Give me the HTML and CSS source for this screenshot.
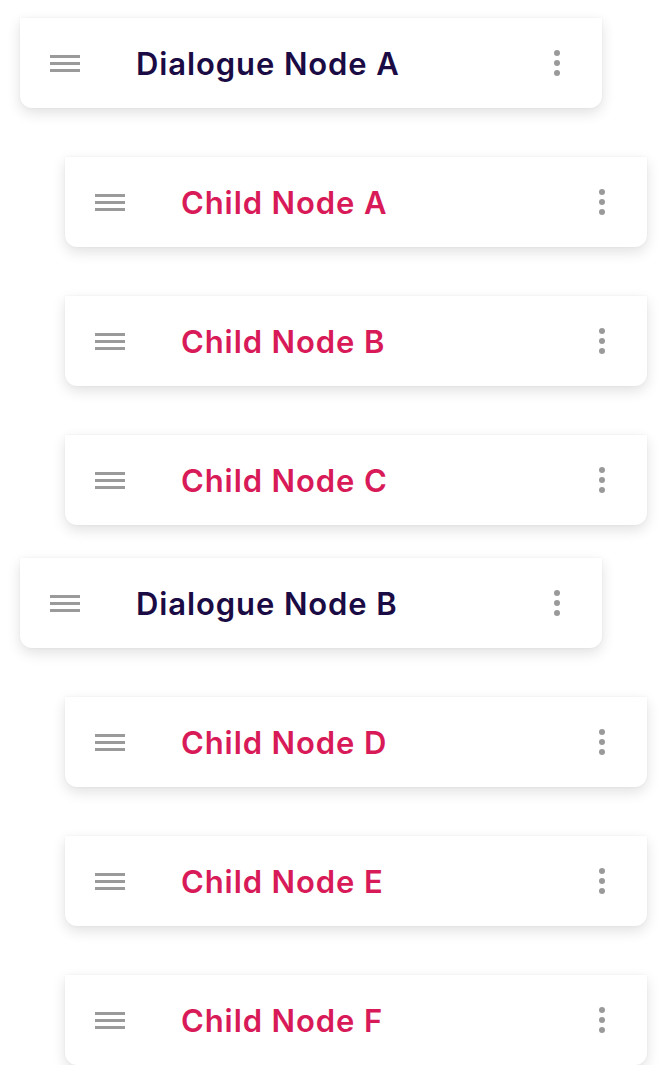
FILE: index.html
```html
<!DOCTYPE html>
<html>
<head>
<meta charset="utf-8">
<link rel="stylesheet" href="styles.css">
</head>
<body>
<div class="tree">
  <div class="card parent">
    <span class="handle"><i></i><i></i><i></i></span>
    <span class="label">Dialogue Node A</span>
    <span class="more"><i></i><i></i><i></i></span>
  </div>
  <div class="card child">
    <span class="handle"><i></i><i></i><i></i></span>
    <span class="label">Child Node A</span>
    <span class="more"><i></i><i></i><i></i></span>
  </div>
  <div class="card child">
    <span class="handle"><i></i><i></i><i></i></span>
    <span class="label">Child Node B</span>
    <span class="more"><i></i><i></i><i></i></span>
  </div>
  <div class="card child">
    <span class="handle"><i></i><i></i><i></i></span>
    <span class="label">Child Node C</span>
    <span class="more"><i></i><i></i><i></i></span>
  </div>
  <div class="card parent">
    <span class="handle"><i></i><i></i><i></i></span>
    <span class="label">Dialogue Node B</span>
    <span class="more"><i></i><i></i><i></i></span>
  </div>
  <div class="card child">
    <span class="handle"><i></i><i></i><i></i></span>
    <span class="label">Child Node D</span>
    <span class="more"><i></i><i></i><i></i></span>
  </div>
  <div class="card child">
    <span class="handle"><i></i><i></i><i></i></span>
    <span class="label">Child Node E</span>
    <span class="more"><i></i><i></i><i></i></span>
  </div>
  <div class="card child">
    <span class="handle"><i></i><i></i><i></i></span>
    <span class="label">Child Node F</span>
    <span class="more"><i></i><i></i><i></i></span>
  </div>
</div>
</body>
</html>
```
FILE: styles.css
```css
html, body {
  margin: 0;
  padding: 0;
  background: #ffffff;
}
body {
  font-family: Inter, "Noto Sans", sans-serif;
}
.tree {
  display: flex;
  flex-direction: column;
  padding-top: 18px;
}
.card {
  box-sizing: border-box;
  width: 582px;
  height: 90px;
  background: #ffffff;
  border-radius: 0 0 12px 12px;
  box-shadow: 0 5px 14px rgba(0, 0, 0, 0.12), 0 0 3px rgba(0, 0, 0, 0.05);
  display: flex;
  align-items: center;
  padding: 0 42px 0 30px;
}
.parent {
  margin-left: 20px;
  margin-top: 33px;
}
.parent:first-child {
  margin-top: 0;
}
.child {
  margin-left: 65px;
  margin-top: 49px;
}
.handle {
  display: flex;
  flex-direction: column;
  gap: 4px;
  width: 30px;
}
.handle i {
  display: block;
  height: 3px;
  background: #9a9a9a;
}
.label {
  flex: 1;
  margin-left: 56px;
  font-size: 31px;
  font-weight: 600;
  letter-spacing: 0.9px;
}
.parent .label {
  color: #1b0b44;
}
.child .label {
  color: #d81b58;
}
.more {
  display: flex;
  flex-direction: column;
  gap: 3.5px;
}
.more i {
  display: block;
  width: 6.5px;
  height: 6.5px;
  border-radius: 50%;
  background: #9a9a9a;
}
```
